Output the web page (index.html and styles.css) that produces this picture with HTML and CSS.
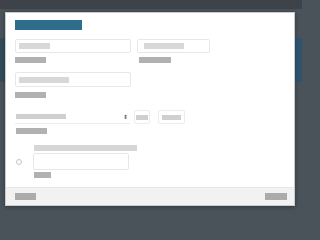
FILE: index.html
```html
<!DOCTYPE html>
<html>
<head>
<meta charset="utf-8">
<link rel="stylesheet" href="styles.css">
</head>
<body>
<div class="backdrop">
  <div class="topstrip"></div>
  <div class="band band-left"></div>
  <div class="band band-right"></div>
</div>
<div class="modal">
  <div class="modal-body">
    <div class="title"></div>
    <div class="row row-1">
      <div class="field f-wide">
        <div class="input"><span class="ph" style="width:31px"></span></div>
        <span class="label" style="width:31px"></span>
      </div>
      <div class="field f-mid">
        <div class="input input-pad"><span class="ph" style="width:40px"></span></div>
        <span class="label label-in" style="width:32px"></span>
      </div>
    </div>
    <div class="row row-2">
      <div class="field f-wide">
        <div class="input input-tall"><span class="ph" style="width:50px"></span></div>
        <span class="label" style="width:31px"></span>
      </div>
    </div>
    <div class="row row-3">
      <div class="field">
        <div class="controls">
          <div class="select"><span class="ph ph-dark" style="width:50px"></span><span class="arrows">⬍</span></div>
          <div class="box box-s"><span class="ph ph-dark" style="width:12px"></span></div>
          <div class="box box-m"><span class="ph ph-dark" style="width:19px"></span></div>
        </div>
        <span class="label label-in1" style="width:31px"></span>
      </div>
    </div>
    <div class="row row-4">
      <div class="radio"></div>
      <div class="field">
        <span class="ph ph-long" style="width:103px"></span>
        <div class="textbox"></div>
        <span class="label label-in1" style="width:17px"></span>
      </div>
    </div>
  </div>
  <div class="footer">
    <span class="btn" style="width:21px"></span>
    <span class="btn" style="width:22px"></span>
  </div>
</div>
</body>
</html>
```
FILE: styles.css
```css
html, body {
  margin: 0;
  padding: 0;
}
html {
  background: #4a525a;
}
body {
  width: 302px;
  height: 217px;
  overflow: hidden;
  background: #4a525a;
  font-family: "Liberation Sans", Arial, sans-serif;
  position: relative;
}
.backdrop {
  position: absolute;
  inset: 0;
}
.topstrip {
  height: 9px;
  background: #3d4348;
}
.band {
  position: absolute;
  top: 38px;
  height: 44px;
}
.band-left {
  left: 0;
  width: 6px;
  background: #334b5c;
}
.band-right {
  right: 0;
  width: 8px;
  background: #2f5470;
}
.modal {
  position: absolute;
  left: 5px;
  top: 12px;
  width: 288px;
  height: 192px;
  background: #ffffff;
  border: 1px solid #c9cccf;
  box-shadow: 0 1px 4px rgba(0,0,0,0.35);
  display: flex;
  flex-direction: column;
}
.modal-body {
  flex: 1;
  padding: 7px 9px 0;
  display: flex;
  flex-direction: column;
}
.title {
  width: 67px;
  height: 10px;
  background: #2f6d8d;
}
.row {
  display: flex;
}
.row-1 { margin-top: 9px; gap: 6px; }
.row-2 { margin-top: 9px; }
.row-3 { margin-top: 12px; }
.row-4 { margin-top: 11px; gap: 0; }
.field {
  display: flex;
  flex-direction: column;
}
.f-wide { width: 116px; }
.f-mid { width: 73px; }
.input {
  box-sizing: border-box;
  height: 14px;
  border: 1px solid #e8e8e8;
  border-radius: 2px;
  display: flex;
  align-items: center;
  padding-left: 3px;
}
.input-pad { padding-left: 6px; }
.input-tall { height: 15px; }
.ph {
  display: block;
  height: 6px;
  background: #d8d8d8;
}
.ph-dark { background: #cfcfcf; height: 5px; }
.label {
  display: block;
  height: 6px;
  margin-top: 4px;
  background: #b1b1b1;
}
.row-2 .label { margin-top: 5px; }
.label-in { margin-left: 2px; }
.label-in1 { margin-left: 1px; }
.controls {
  display: flex;
  gap: 4px;
}
.select {
  box-sizing: border-box;
  width: 115px;
  height: 14px;
  border-bottom: 1px solid #ececec;
  display: flex;
  align-items: center;
  padding-left: 1px;
}
.arrows {
  margin-left: auto;
  margin-right: 2px;
  font-size: 6px;
  line-height: 6px;
  color: #777;
}
.box {
  box-sizing: border-box;
  height: 14px;
  border: 1px solid #ececec;
  border-radius: 2px;
  display: flex;
  align-items: center;
  justify-content: center;
}
.box-s { width: 16px; }
.box-m { width: 27px; margin-left: 4px; }
.radio {
  width: 4px;
  height: 4px;
  border: 1px solid #c4c4c4;
  border-radius: 50%;
  margin: 14px 11px 0 1px;
}
.ph-long { margin-left: 1px; background: #d6d6d6; }
.textbox {
  box-sizing: border-box;
  width: 96px;
  height: 17px;
  margin-top: 2px;
  border: 1px solid #e6e6e6;
  border-radius: 2px;
}
.row-4 .label { margin-top: 2px; }
.footer {
  height: 17px;
  background: #f2f2f2;
  border-top: 1px solid #e6e6e6;
  display: flex;
  align-items: center;
  justify-content: space-between;
  padding: 0 7px 0 9px;
}
.btn {
  display: block;
  height: 7px;
  background: #ababab;
}
```
